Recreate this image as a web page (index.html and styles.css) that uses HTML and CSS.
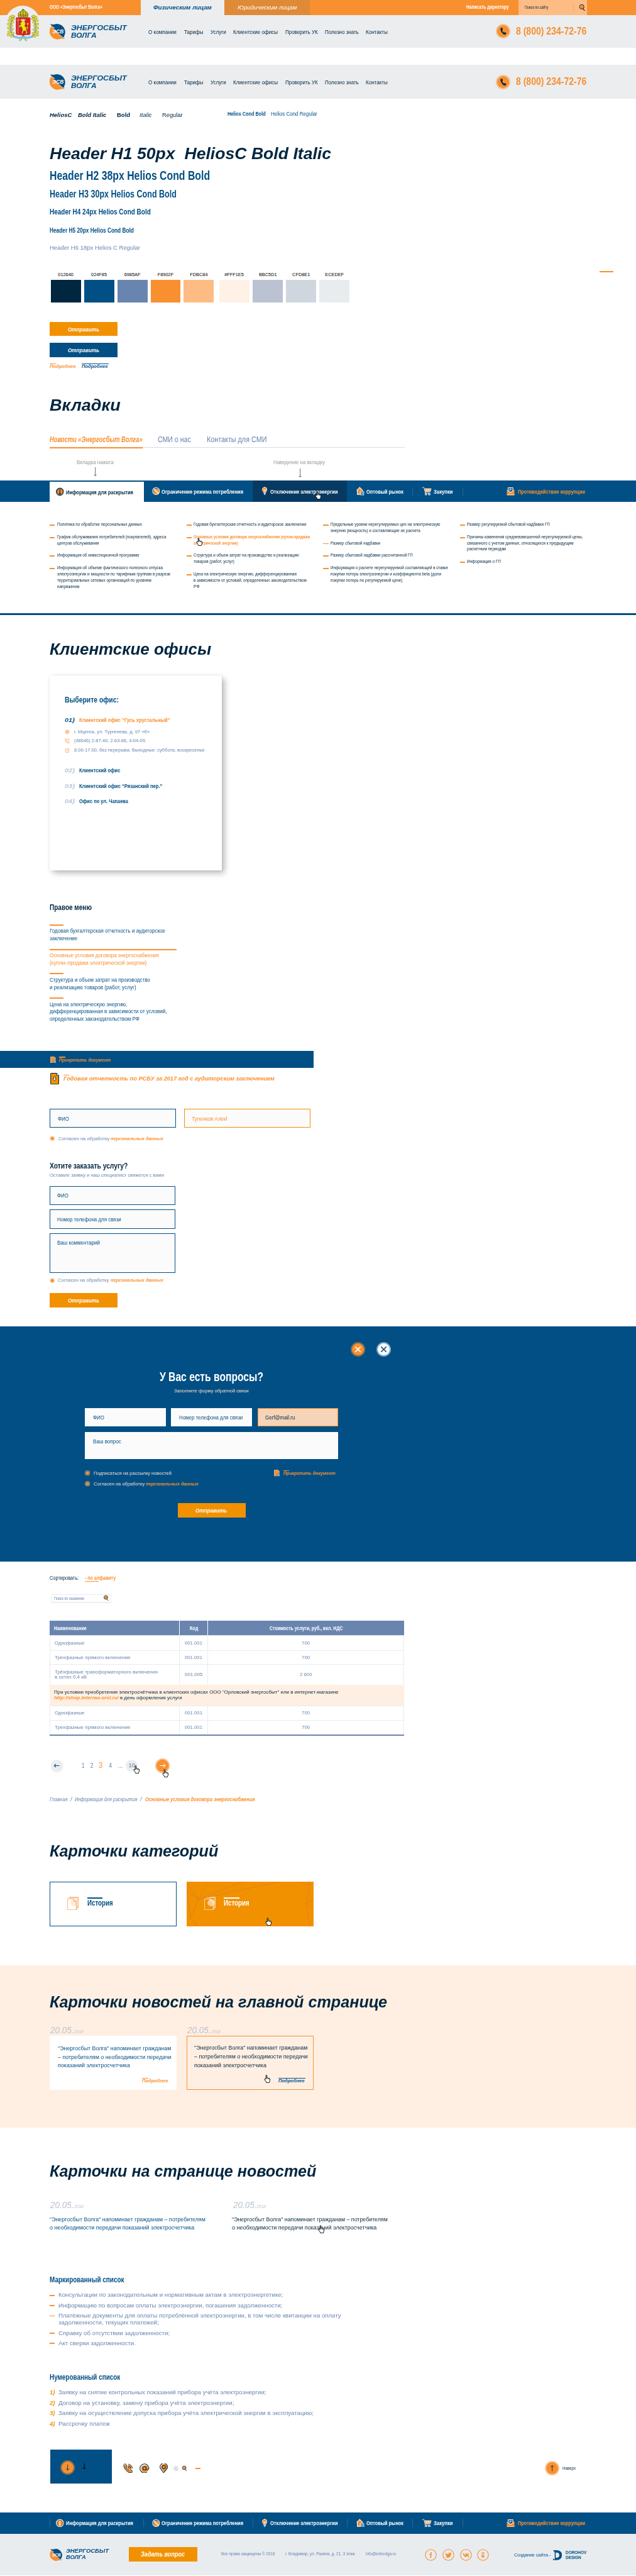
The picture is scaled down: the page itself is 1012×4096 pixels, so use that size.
FILE: index.html
```html
<!DOCTYPE html>
<html lang="ru">
<head>
<meta charset="utf-8">
<title>Энергосбыт Волга — UI Kit</title>
<link rel="stylesheet" href="styles.css">
</head>
<body>
<svg class="defs" aria-hidden="true">
  <symbol id="mark" viewBox="0 0 48 50">
    <path fill="#f8902f" d="M4 10 16 15 13 16 34 39 46 47 34 46.500A24.500 24.500 0 0 1 4 10Z"/>
    <path fill="#024f85" d="M2 3 13 4A24.500 24.500 0 0 1 43 40L45 43 38 41 12 17 16 14 7 9Z"/>
    <text x="8" y="30.500" font-size="15.500" font-weight="bold" font-style="italic" fill="#fff" textLength="34" lengthAdjust="spacingAndGlyphs">ЭСВ</text>
  </symbol>
  <symbol id="leaf" viewBox="0 0 30 90">
    <path d="M26 8Q8 40 14 62T34 86" fill="none" stroke="#7dbbe8" stroke-width="7"/>
    <g fill="#f2e21b" stroke="#6b6412" stroke-width="1">
      <ellipse cx="20" cy="10" rx="7" ry="4"/><ellipse cx="12" cy="15" rx="5" ry="4"/><ellipse cx="22" cy="20" rx="6" ry="4"/><ellipse cx="9" cy="25" rx="6" ry="4"/><ellipse cx="19" cy="31" rx="5" ry="4"/><ellipse cx="7" cy="38" rx="6" ry="4"/><ellipse cx="16" cy="44" rx="5" ry="4"/><ellipse cx="7" cy="52" rx="6" ry="4"/><ellipse cx="18" cy="57" rx="5" ry="4"/><ellipse cx="8" cy="66" rx="6" ry="4"/><ellipse cx="20" cy="71" rx="6" ry="4"/><ellipse cx="5" cy="76" rx="6" ry="4"/><ellipse cx="17" cy="81" rx="6" ry="4"/>
    </g>
  </symbol>
  <symbol id="emblem" viewBox="0 0 98 98">
    <use href="#leaf" x="-1" y="14" width="28" height="76"/>
    <use href="#leaf" x="-1" y="14" width="28" height="76" transform="translate(98 0) scale(-1 1)"/>
    <path d="M26 84Q38 92 49 83 60 92 72 84M49 84 38 97M49 84 60 97" fill="none" stroke="#7dbbe8" stroke-width="6"/>
    <path d="M44 88 37 97M54 88 61 97" stroke="#e8d81c" stroke-width="3"/>
    <path d="M27 26H71V73Q71 79 65 79H54L49 82 44 79H33Q27 79 27 73Z" fill="#dd1f1f"/>
    <path d="M34 29V76M29 34H40" stroke="#b9b9b9" stroke-width="1.500" fill="none"/>
    <path d="M44 37Q49 34 54 37L56 45 54 52 59 58 62 74 56 77 58 68 51 66 47 76 44 75 47 62 44 54 36 56 36 52 43 47 35 46 42 43ZM57 64Q68 60 62 50T66 43" fill="#f2e21b" stroke="#5b4e10" stroke-width="1.200"/>
    <path d="M43 36 42 30 46 33 49 30 52 33 56 30 54 36Z" fill="#eee"/>
    <path d="M35 25Q31 10 43 8 45 2 49 2 53 2 55 8 67 10 63 25Z" fill="#d9c81d" stroke="#4d4710" stroke-width="1.500"/>
    <path d="M49 0V25M42 9Q39 17 43 24M56 9Q59 17 55 24M35 19H63" stroke="#4d4710" stroke-width="1.500" fill="none"/>
  </symbol>
  <symbol id="lens" viewBox="0 0 20 24"><circle cx="10" cy="11" r="7" fill="#f8902f"/><circle cx="9" cy="10" r="7.500" fill="none" stroke="#012640" stroke-width="2"/><path d="m13 17 6 6" stroke="#012640" stroke-width="2.500"/></symbol>
  <symbol id="call" viewBox="0 0 44 44"><circle cx="22" cy="22" r="22" fill="#f8902f" opacity=".45"/><circle cx="22" cy="22" r="18" fill="#f8902f"/><path d="M15 13q3-3 5 0l1 4-2 2q1 5 5 7l3-1 4 2q1 3-2 5-7 1-12-8-5-8-2-11Z" fill="#012640"/></symbol>
  <symbol id="info" viewBox="0 0 24 24"><circle cx="12" cy="12" r="11" fill="#f8902f" stroke="currentColor" stroke-width="2"/><circle cx="12" cy="12" r="8.500" fill="none" stroke="#012640"/><circle cx="12" cy="7" r="1.800" fill="currentColor"/><path d="M12 10v8M10 10.500h2M9.500 18h5" stroke="currentColor" stroke-width="2.600"/></symbol>
  <symbol id="stop" viewBox="0 0 24 24"><circle cx="13" cy="13" r="9" fill="#f8902f"/><circle cx="12" cy="12" r="10.500" fill="none" stroke="#fff" stroke-width="2"/><path d="m5 5 14 14" stroke="#fff" stroke-width="2.500"/></symbol>
  <symbol id="bulb" viewBox="0 0 16 24"><path d="M4.500 16Q4 13 2 11A7 7 0 1 1 14 11Q12 13 11.500 16Z" fill="#f8902f" stroke="#fff" stroke-width="1.800"/><path d="m5 8 3 2 3-2M8 10v6M4.500 19h7M6 22h4" stroke="#fff" stroke-width="2" fill="none"/></symbol>
  <symbol id="house" viewBox="0 0 24 26"><path d="M2 10 11 3 20 10V23H4V10" fill="#f8902f"/><path d="M1 11 10 2 19 11M3 10V23H11" fill="none" stroke="#fff" stroke-width="2"/><path d="M12 14H23V25H12ZM12 18H23M12 21.500H23" fill="#024f85" stroke="#fff" stroke-width="1.600"/></symbol>
  <symbol id="cart" viewBox="0 0 28 26"><path d="M7 5H26L23 15H8Z" fill="#f8902f"/><path d="M0 2H5L9 19H24M7 6H27L24 15H8M13 6V15M19 6V15M8 10H25" fill="none" stroke="#fff" stroke-width="1.600"/><circle cx="11" cy="22.500" r="2.500" fill="none" stroke="#fff" stroke-width="2"/><circle cx="21" cy="22.500" r="2.500" fill="none" stroke="#fff" stroke-width="2"/></symbol>
  <symbol id="mail" viewBox="0 0 25 26"><path d="M1 10 12 2 24 10V25H1Z" fill="#f8902f"/><path d="M5 12V3H19V12L12 17Z" fill="#024f85" stroke="#fff" stroke-width="2"/><path d="M10 12V6H14V9H10" stroke="#fff" fill="none" stroke-width="1.500"/><path d="M1 24.500H24" stroke="#fff" stroke-width="2"/></symbol>
  <symbol id="hand" viewBox="0 0 20 25"><path d="M6 13V3Q6 1 7.500 1T9 3V9Q11 8 12 10 14 9 15 11 18 10.500 18 13V18L16 23V24H7V22L2 15Q1 12 4 12Z" fill="#fff" stroke="#000" stroke-width="1.800" stroke-linejoin="round"/><path d="M9 9V13M12 10V13M15 11V14" stroke="#000" stroke-width="1.200"/></symbol>
  <symbol id="radio" viewBox="0 0 16 16"><circle cx="8" cy="8" r="7.300" fill="none" stroke="#fdbc84" stroke-width="1.400"/><circle cx="8" cy="8" r="5" fill="#f8902f"/></symbol>
  <symbol id="clip" viewBox="0 0 17 20"><path d="M.700.700H12L16 5V19H.700Z" fill="#f8902f" stroke="#fbd3ab" stroke-width="1.300"/><path d="m7 17 8-9 2 4-5 6Z" fill="#9dc0da" stroke="#024f85"/></symbol>
  <symbol id="file" viewBox="0 0 27 35"><path d="M1.200 3q0-2 2-2H19L25.500 8V32q0 2-2 2H3.200q-2 0-2-2Z" fill="#f29100" stroke="#012640" stroke-width="2"/><path d="M19 1V8H25.500" fill="#fff" stroke="#012640" stroke-width="1.800"/><path d="M10.500 12H15.500V18H18L13 24 8 18H10.500Z" fill="#fff" stroke="#012640" stroke-width="1.500"/></symbol>
  <symbol id="docs" viewBox="0 0 34 40"><path d="M7 .700H33.300V33H30M4 4V3H30V37H27" fill="none" stroke="currentColor" stroke-width="1.300"/><circle cx="21" cy="18" r="11" fill="#ffe3cc" opacity=".7"/><path d="M.700 6.500H20L27 14V39.300H.700ZM20 6.500V14H27" fill="none" stroke="currentColor" stroke-width="1.300"/></symbol>
  <symbol id="down" viewBox="0 0 44 44"><circle cx="22" cy="22" r="22" fill="#f8902f" opacity=".5"/><circle cx="22" cy="22" r="18" fill="#f8902f"/><path d="M22 13V30M17 25 22 30 27 25" fill="none" stroke="#012640" stroke-width="1.600"/></symbol>
</svg>

<div class="page">
  <header class="top">
    <div class="topbar">
      <div class="crest"><svg><use href="#emblem"/></svg></div>
      <div class="org"><b class="t" data-w="159">ООО «Энергосбыт Волга»</b></div>
      <div class="aud aud-on"><b class="t it" data-w="176">Физическим лицам</b></div>
      <div class="aud aud-off"><i class="t" data-w="179">Юридическим лицам</i></div>
      <div class="director"><b class="t" data-w="128">Написать директору</b></div>
      <div class="sitesearch"><span class="t" data-w="71">Поиск по сайту</span><svg><use href="#lens"/></svg></div>
    </div>
    <div class="mainbar">
      <div class="logo"><svg><use href="#mark"/></svg><div><b class="t it" data-w="168">ЭНЕРГОСБЫТ</b><b class="t it" data-w="77">ВОЛГА</b></div></div>
      <nav><span class="t" data-w="85">О компании</span><span class="t" data-w="58">Тарифы</span><span class="t" data-w="47">Услуги</span><span class="t" data-w="135">Клиентские офисы</span><span class="t" data-w="98">Проверить УК</span><span class="t" data-w="102">Полезно знать</span><span class="t" data-w="66">Контакты</span></nav>
      <div class="phone"><svg><use href="#call"/></svg><b class="t" data-w="213">8 (800) 234-72-76</b></div>
    </div>
  </header>
  <header class="mainbar fixedbar">
    <div class="logo"><svg><use href="#mark"/></svg><div><b class="t it" data-w="168">ЭНЕРГОСБЫТ</b><b class="t it" data-w="77">ВОЛГА</b></div></div>
    <nav><span class="t" data-w="85">О компании</span><span class="t" data-w="58">Тарифы</span><span class="t" data-w="47">Услуги</span><span class="t" data-w="135">Клиентские офисы</span><span class="t" data-w="98">Проверить УК</span><span class="t" data-w="102">Полезно знать</span><span class="t" data-w="66">Контакты</span></nav>
    <div class="phone"><svg><use href="#call"/></svg><b class="t" data-w="213">8 (800) 234-72-76</b></div>
  </header>

  <section class="pad">
    <div class="samples">
      <b class="t it" data-w="67">HeliosC</b><b class="t it s2" data-w="86">Bold Italic</b><b class="t s3" data-w="40">Bold</b><i class="t s3" data-w="37">Italic</i><span class="t s3" data-w="62">Regular</span>
      <div class="cond"><b class="t" data-w="115">Helios Cond Bold</b><span class="t" data-w="140">Helios Cond Regular</span></div>
    </div>
    <h1 class="h1 first"><span class="t" data-w="850">Header H1 50px&nbsp; HeliosC Bold Italic</span></h1>
    <h2 class="h2"><span class="t" data-w="484">Header H2 38px Helios Cond Bold</span></h2>
    <h3 class="h3"><span class="t" data-w="383">Header H3 30px Helios Cond Bold</span></h3>
    <h4 class="h4"><span class="t" data-w="305">Header H4 24px Helios Cond Bold</span></h4>
    <h5 class="h5"><span class="t" data-w="254">Header H5 20px Helios Cond Bold</span></h5>
    <h6 class="h6"><span class="t" data-w="273">Header H6 18px Helios C Regular</span></h6>
    <div class="swatches">
      <div class="sw c1">012640<i></i></div><div class="sw c2">024F85<i></i></div><div class="sw c3">6985AF<i></i></div><div class="sw c4">F8902F<i></i></div><div class="sw c5">FDBC84<i></i></div><div class="sw c6">#FFF1E5<i></i></div><div class="sw c7">BBC5D1<i></i></div><div class="sw c8">CFD8E1<i></i></div><div class="sw c9">ECEDEF<i></i></div>
      <div class="dash"></div>
    </div>
    <div class="btn b-first"><b class="t it" data-w="95">Отправить</b></div>
    <div class="btn blue"><b class="t it" data-w="95">Отправить</b></div>
    <div class="mores"><div class="more"><b class="t it" data-w="79">Подробнее</b></div><div class="more on"><b class="t it" data-w="79">Подробнее</b></div></div>

    <h1 class="h1 g-tabs"><span class="t" data-w="214">Вкладки</span></h1>
    <div class="tabs"><b class="t it" data-w="280">Новости «Энергосбыт Волга»</b><span class="t" data-w="100">СМИ о нас</span><span class="t" data-w="181">Контакты для СМИ</span></div>
    <div class="tabline"><i></i><u></u></div>
    <div class="notes">
      <div class="n1"><span class="t" data-w="112">Вкладка нажата</span><svg viewBox="0 0 10 27"><path d="M5 0V26M1 22 5 26 9 22"/></svg></div>
      <div class="n2"><span class="t" data-w="156">Наведение на вкладку</span><svg viewBox="0 0 10 27"><path d="M5 0V26M1 22 5 26 9 22"/></svg></div>
    </div>
  </section>

  <nav class="menu">
    <div class="m m1 active"><svg><use href="#info"/></svg><b class="t" data-w="203">Информация для раскрытия</b></div>
    <div class="m m2"><svg><use href="#stop"/></svg><b class="t" data-w="247">Ограничение режима потребления</b></div>
    <div class="m m3 hover"><svg><use href="#bulb"/></svg><b class="t" data-w="204">Отключение электроэнергии</b></div>
    <div class="m m4"><svg><use href="#house"/></svg><b class="t" data-w="112">Оптовый рынок</b><s></s></div>
    <div class="m m5"><svg><use href="#cart"/></svg><b class="t" data-w="58">Закупки</b><s></s></div>
    <div class="m m6"><svg><use href="#mail"/></svg><b class="t" data-w="203">Противодействие коррупции</b></div>
    <svg class="hand hd1"><use href="#hand"/></svg>
  </nav>
  <div class="submenu">
    <ul>
      <li><p><span class="t" data-w="256">Политика по обработке персональных данных</span></p></li>
      <li><p><span class="t" data-w="329">График обслуживания потребителей (покупателей), адреса</span><span class="t" data-w="126">центров обслуживания</span></p></li>
      <li><p><span class="t" data-w="248">Информация об инвестиционной программе</span></p></li>
      <li><p><span class="t" data-w="319">Информация об объеме фактического полезного отпуска</span><span class="t" data-w="342">электроэнергии и мощности по тарифным группам в разрезе</span><span class="t" data-w="284">территориальных сетевых организаций по уровням</span><span class="t" data-w="67">напряжения</span></p></li>
    </ul>
    <ul>
      <li><p><span class="t" data-w="341">Годовая бухгалтерская отчетность и аудиторское заключение</span></p></li>
      <li class="cur"><p><b class="t" data-w="351">Основные условия договора энергоснабжения (купли-продажи</b><b class="t" data-w="133">электрической энергии)</b></p><svg class="hand"><use href="#hand"/></svg></li>
      <li><p><span class="t" data-w="318">Структура и объем затрат на производство и реализацию</span><span class="t" data-w="123">товаров (работ, услуг)</span></p></li>
      <li><p><span class="t" data-w="311">Цена на электрическую энергию, дифференцированная</span><span class="t" data-w="341">в зависимости от условий, определенных законодательством</span><span class="t" data-w="18">РФ</span></p></li>
    </ul>
    <ul>
      <li><p><span class="t" data-w="331">Предельные уровни нерегулируемых цен на электрическую</span><span class="t" data-w="271">энергию (мощность) и составляющие их расчета</span></p></li>
      <li><p><span class="t" data-w="150">Размер сбытовой надбавки</span></p></li>
      <li><p><span class="t" data-w="248">Размер сбытовой надбавки рассчитанной ГП</span></p></li>
      <li><p><span class="t" data-w="355">Информация о расчете нерегулируемой составляющей в ставке</span><span class="t" data-w="334">покупки потерь электроэнергии и коэффициента beta (доли</span><span class="t" data-w="217">покупки потерь по регулируемой цене)</span></p></li>
    </ul>
    <ul>
      <li><p><span class="t" data-w="250">Размер регулируемой сбытовой надбавки ГП</span></p></li>
      <li><p><span class="t" data-w="350">Причины изменения средневзвешенной нерегулируемой цены,</span><span class="t" data-w="322">связанного с учетом данных, относящихся к предыдущим</span><span class="t" data-w="118">расчетным периодам</span></p></li>
      <li><p><span class="t" data-w="102">Информация о ГП</span></p></li>
    </ul>
  </div>

  <section class="pad">
    <h1 class="h1 g-off"><span class="t" data-w="488">Клиентские офисы</span></h1>
    <div class="offices">
      <h4><span class="t" data-w="163">Выберите офис:</span></h4>
      <div class="of o1"><b class="t it" data-w="30">01)</b><b class="t" data-w="274">Клиентский офис “Гусь хрустальный”</b></div>
      <div class="det">
        <div><svg viewBox="0 0 16 16"><path d="M8 15 1.500 8A6.500 6.500 0 1 1 14.500 8Z"/><circle cx="8" cy="7" r="4"/><circle cx="8" cy="7" r="1.500"/></svg><span class="t" data-w="228">г. Мценск, ул. Тургенева, д. 97 «б»</span></div>
        <div><svg viewBox="0 0 16 16"><path d="M2 1q3-1 4 3l-2 2q1 4 5 6l2-2q4 1 4 4-3 3-8-1T1 5ZM9 1q5 1 6 6M9 4q3 0 3 3"/></svg><span class="t" data-w="218">(48646) 2-87-40, 2-63-86, 4-04-09.</span></div>
        <div><svg viewBox="0 0 16 16"><circle cx="8" cy="8.500" r="6"/><path d="M8 5V9H10M1 4 4 1.500M15 4 12 1.500M3 15 4 13M13 15 12 13"/></svg><span class="t" data-w="394">8.00-17.00, без перерыва. Выходные: суббота, воскресенье</span></div>
      </div>
      <div class="of o2"><b class="t it" data-w="30">02)</b><b class="t" data-w="124">Клиентский офис</b></div>
      <div class="of o3"><b class="t it" data-w="30">03)</b><b class="t" data-w="251">Клиентский офис “Рязанский пер.”</b></div>
      <div class="of o4"><b class="t it" data-w="30">04)</b><b class="t" data-w="148">Офис по ул. Чапаева</b></div>
    </div>
    <h4 class="rm-h"><span class="t" data-w="127">Правое меню</span></h4>
    <div class="rmenu">
      <p><span class="t" data-w="349">Годовая бухгалтерская отчетность и аудиторское</span><span class="t" data-w="84">заключение</span></p>
      <p class="on"><span class="t" data-w="330">Основные условия договора энергоснабжения</span><span class="t" data-w="293">(купли–продажи электрической энергии)</span></p>
      <p><span class="t" data-w="303">Структура и объем затрат на производство</span><span class="t" data-w="261">и реализацию товаров (работ, услуг)</span></p>
      <p><span class="t" data-w="234">Цена на электрическую энергию,</span><span class="t" data-w="354">дифференцированная в зависимости от условий,</span><span class="t" data-w="271">определенных законодательством РФ</span></p>
    </div>
  </section>

  <div class="band"><svg><use href="#clip"/></svg><div class="more"><b class="t it" data-w="156">Прикрепить документ</b></div></div>

  <section class="pad">
    <div class="report"><svg><use href="#file"/></svg><div class="more big"><b class="t it" data-w="637">Годовая отчетность по РСБУ за 2017 год с аудиторским заключением</b></div></div>
    <div class="pair"><div class="inp"><span class="t" data-w="34">ФИО</span></div><div class="inp focus"><span class="t" data-w="107">Туленков Алекl</span></div></div>
    <div class="agree a1"><svg><use href="#radio"/></svg><span class="t" data-w="154">Согласен на обработку</span><b class="t it" data-w="159">персональных данных</b></div>
    <div class="order">
      <h4><span class="t" data-w="236">Хотите заказать услугу?</span></h4>
      <div class="hint"><span class="t" data-w="345">Оставьте заявку и наш специалист свяжется с вами</span></div>
      <div class="inp"><span class="t" data-w="34">ФИО</span></div>
      <div class="inp"><span class="t" data-w="193">Номер телефона для связи</span></div>
      <div class="inp area"><span class="t" data-w="129">Ваш комментарий</span></div>
      <div class="agree a2"><svg><use href="#radio"/></svg><span class="t" data-w="154">Согласен на обработку</span><b class="t it" data-w="159">персональных данных</b></div>
      <div class="btn b-order"><b class="t it" data-w="95">Отправить</b></div>
    </div>
  </section>

  <section class="ask">
    <div class="closes">
      <svg viewBox="0 0 44 44"><circle cx="22" cy="22" r="22" fill="#f8902f" opacity=".5"/><circle cx="22" cy="22" r="18" fill="#f8902f"/><path d="m14 14 16 16M30 14 14 30" stroke="#fff" stroke-width="3"/></svg>
      <svg viewBox="0 0 44 44"><circle cx="22" cy="22" r="22" fill="#fff" opacity=".5"/><circle cx="22" cy="22" r="18" fill="#fff"/><path d="m14 14 16 16M30 14 14 30" stroke="#024f85" stroke-width="3"/></svg>
    </div>
    <div class="askform">
      <h2><span class="t" data-w="313">У Вас есть вопросы?</span></h2>
      <div class="asub"><span class="t" data-w="225">Заполните форму обратной связи</span></div>
      <div class="arow"><div class="ai"><span class="t" data-w="34">ФИО</span></div><div class="ai"><span class="t" data-w="192">Номер телефона для связи</span></div><div class="ai filled"><span class="t" data-w="90">Gerf@mail.ru</span></div></div>
      <div class="ai aq"><span class="t" data-w="85">Ваш вопрос</span></div>
      <div class="aopts">
        <div><div class="agree"><svg><use href="#radio"/></svg><span class="t" data-w="235">Подписаться на рассылку новостей</span></div><div class="agree"><svg><use href="#radio"/></svg><span class="t" data-w="154">Согласен на обработку</span><b class="t it" data-w="159">персональных данных</b></div></div>
        <div class="attach"><svg><use href="#clip"/></svg><div class="more"><b class="t it" data-w="157">Прикрепить документ</b></div></div>
      </div>
      <div class="btn b-ask"><b class="t it" data-w="95">Отправить</b></div>
    </div>
  </section>

  <section class="pad">
    <div class="sort"><span class="t" data-w="88">Сортировать:</span><div><b class="t" data-w="93">- по алфавиту</b><i></i></div></div>
    <div class="find"><span class="t" data-w="91">Поиск по названию</span><svg><use href="#lens"/></svg></div>
    <div class="table">
      <div class="tr th"><div><b class="t" data-w="98">Наименование</b></div><div><b class="t" data-w="25">Код</b></div><div><b class="t" data-w="221">Стоимость услуги, руб., вкл. НДС</b></div></div>
      <div class="tr r1"><div><span class="t" data-w="90">Однофазные</span></div><div><span class="t" data-w="53">001.001</span></div><div><span class="t" data-w="25">700</span></div></div>
      <div class="tr r2"><div><span class="t" data-w="228">Трехфазные прямого включения</span></div><div><span class="t" data-w="53">001.001</span></div><div><span class="t" data-w="25">700</span></div></div>
      <div class="tr r3"><div><span class="t" data-w="311">Трёхфазные трансформаторного включения</span><span class="t" data-w="97">в сетях 0,4 кВ</span></div><div><span class="t" data-w="54">001.005</span></div><div><span class="t" data-w="37">2 600</span></div></div>
      <div class="note"><div><span class="t" data-w="859">При условии приобретения электросчётчика в клиентских офисах ООО "Орловский энергосбыт" или в интернет-магазине</span></div><div><b class="t it" data-w="195">http://shop.interrao-orel.ru/</b><span class="t" data-w="187">в день оформления услуги</span></div></div>
      <div class="tr r4"><div><span class="t" data-w="90">Однофазные</span></div><div><span class="t" data-w="53">001.001</span></div><div><span class="t" data-w="25">700</span></div></div>
      <div class="tr r5"><div><span class="t" data-w="228">Трехфазные прямого включения</span></div><div><span class="t" data-w="53">001.001</span></div><div><span class="t" data-w="25">700</span></div></div>
    </div>
    <div class="pager">
      <svg class="prev" viewBox="0 0 36 36"><circle cx="18" cy="18" r="17.500" fill="#ecedef"/><path d="M26 18H10M15 13 10 18 15 23" fill="none" stroke="#024f85" stroke-width="2"/></svg>
      <span class="p1">1</span><span class="p2">2</span><span class="p3">3</span><span class="p4">4</span><span class="p5">...</span><span class="p10">10<svg class="hand"><use href="#hand"/></svg></span>
      <div class="next"><svg viewBox="0 0 44 44"><circle cx="22" cy="22" r="22" fill="#fdbc84"/><circle cx="22" cy="22" r="18" fill="#f8902f"/><path d="M14 22H30M25 17 30 22 25 27" fill="none" stroke="#fff" stroke-width="2"/></svg><svg class="hand"><use href="#hand"/></svg></div>
    </div>
    <div class="crumbs"><i class="t" data-w="54">Главная</i><i class="t" data-w="5">/</i><i class="t" data-w="189">Информация для раскрытия</i><i class="t" data-w="5">/</i><b class="t it" data-w="331">Основные условия договора энергоснабжения</b></div>

    <h1 class="h1 g-cat"><span class="t" data-w="509">Карточки категорий</span></h1>
    <div class="cats">
      <div class="cat"><svg><use href="#docs"/></svg><div><i></i><b class="t" data-w="77">История</b></div></div>
      <div class="cat full">
        <svg class="web" viewBox="0 0 383 135" preserveAspectRatio="none"><path d="M0 28 36 53 62 4M0 5 36 53 168 0M36 53 280 0M36 53 12 110 0 20M12 110 34 135M335 0 372 12 360 66 372 130M372 0V12M383 55 360 66 383 78"/></svg>
        <svg><use href="#docs"/></svg><div><i></i><b class="t" data-w="77">История</b></div><svg class="hand"><use href="#hand"/></svg>
      </div>
    </div>
  </section>

  <section class="pad peach">
    <h1 class="h1 g-main"><span class="t" data-w="1019">Карточки новостей на главной странице</span></h1>
    <div class="newsrow">
      <div><div class="date"><i class="t d" data-w="71">20.05.</i><i class="t" data-w="28">2018</i></div>
        <div class="ncard"><span class="t" data-w="342">"Энергосбыт Волга" напоминает гражданам</span><span class="t" data-w="343">– потребителям о необходимости передачи</span><span class="t" data-w="218">показаний электросчетчика</span><div class="more"><b class="t it" data-w="79">Подробнее</b></div></div></div>
      <div><div class="date"><i class="t d" data-w="71">20.05.</i><i class="t" data-w="28">2018</i></div>
        <div class="ncard over"><span class="t" data-w="342">"Энергосбыт Волга" напоминает гражданам</span><span class="t" data-w="343">– потребителям о необходимости передачи</span><span class="t" data-w="218">показаний электросчетчика</span><div class="more on"><b class="t it" data-w="79">Подробнее</b></div><svg class="hand"><use href="#hand"/></svg></div></div>
    </div>
  </section>

  <section class="pad">
    <h1 class="h1 g-news"><span class="t" data-w="805">Карточки на странице новостей</span></h1>
    <div class="newslist">
      <div><div class="date"><i class="t d" data-w="71">20.05.</i><i class="t" data-w="28">2018</i></div><p><span class="t" data-w="470">"Энергосбыт Волга" напоминает гражданам – потребителям</span><span class="t" data-w="437">о необходимости передачи показаний электросчетчика</span></p></div>
      <div class="over"><div class="date"><i class="t d" data-w="71">20.05.</i><i class="t" data-w="28">2018</i></div><p><span class="t" data-w="470">"Энергосбыт Волга" напоминает гражданам – потребителям</span><span class="t" data-w="437">о необходимости передачи показаний электросчетчика</span></p><svg class="hand"><use href="#hand"/></svg></div>
    </div>
    <h4 class="lh l1"><span class="t" data-w="225">Маркированный список</span></h4>
    <ul class="marks">
      <li><p><span class="t" data-w="678">Консультации по законодательным и нормативным актам в электроэнергетике;</span></p></li>
      <li><p><span class="t" data-w="676">Информацию по вопросам оплаты электроэнергии, погашения задолженности;</span></p></li>
      <li><p><span class="t" data-w="853">Платёжные документы для оплаты потреблённой электроэнергии, в том числе квитанции на оплату</span><span class="t" data-w="303">задолженности, текущих платежей;</span></p></li>
      <li><p><span class="t" data-w="336">Справку об отсутствии задолженности;</span></p></li>
      <li><p><span class="t" data-w="233">Акт сверки задолженности.</span></p></li>
    </ul>
    <h4 class="lh l2"><span class="t" data-w="213">Нумерованный список</span></h4>
    <div class="nums">
      <div><b class="t it" data-w="16">1)</b><span class="t" data-w="627">Заявку на снятие контрольных показаний прибора учёта электроэнергии;</span></div>
      <div><b class="t it" data-w="16">2)</b><span class="t" data-w="530">Договор на установку, замену прибора учёта электроэнергии;</span></div>
      <div><b class="t it" data-w="16">3)</b><span class="t" data-w="770">Заявку на осуществление допуска прибора учёта электрической энергии в эксплуатацию;</span></div>
      <div><b class="t it" data-w="16">4)</b><span class="t" data-w="155">Рассрочку платеж</span></div>
    </div>
    <div class="icons">
      <div class="sq"><svg class="ci"><use href="#down"/></svg><svg class="ar" viewBox="0 0 12 19"><path d="M6 0V17M2 13 6 17 10 13" fill="none" stroke="#000" stroke-width="1.800"/></svg></div>
      <svg class="k1" viewBox="0 0 30 30"><g transform="translate(1 1)" fill="#f8902f"><path d="M6 3 11 9 9 14 18 22 23 19 28 25 22 28Q12 26 4 14T6 3Z"/><circle cx="18" cy="11" r="7"/></g><path d="M5 1Q9 1 11 8L8 12Q11 18 18 22L22 19Q28 21 29 25 25 30 19 28 8 24 3 12 0 4 5 1ZM15 2Q26 4 28 15M15 7Q22 8 23 15M15 12Q18 12 18 15" fill="none" stroke="#012640" stroke-width="1.800"/></svg>
      <svg class="k2" viewBox="0 0 30 30"><circle cx="16" cy="16" r="11" fill="#f8902f"/><circle cx="15" cy="15" r="5" fill="none" stroke="#012640" stroke-width="2"/><path d="M20 10V17Q21 21 25 19 29 16 28 12A13.500 13.500 0 1 0 22 26.500" fill="none" stroke="#012640" stroke-width="2"/></svg>
      <svg class="k3" viewBox="0 0 26 30"><path d="M15 27 5 15A10 10 0 1 1 24 13Z" fill="#f8902f"/><path d="M12 28 3 16A11 11 0 1 1 22 16Z" fill="none" stroke="#012640" stroke-width="2"/><circle cx="12.500" cy="11" r="5" fill="none" stroke="#012640" stroke-width="2"/></svg>
      <svg class="k4" viewBox="0 0 15 15"><circle cx="7.500" cy="7.500" r="6" fill="#e6e9ee" stroke="#cfd8e1" stroke-width="2"/><path d="M7.500 6V11M7.500 3.500V5" stroke="#bbc5d1" stroke-width="1.500"/></svg>
      <svg class="k5"><use href="#lens"/></svg>
      <div class="k6"></div>
      <div class="totop"><svg><use href="#down"/></svg><span class="t" data-w="40">Наверх</span></div>
    </div>
  </section>

  <nav class="menu foot">
    <div class="m m1"><s class="lead"></s><svg><use href="#info"/></svg><b class="t" data-w="203">Информация для раскрытия</b><s></s></div>
    <div class="m m2"><svg><use href="#stop"/></svg><b class="t" data-w="247">Ограничение режима потребления</b><s></s></div>
    <div class="m m3"><svg><use href="#bulb"/></svg><b class="t" data-w="204">Отключение электроэнергии</b><s></s></div>
    <div class="m m4"><svg><use href="#house"/></svg><b class="t" data-w="112">Оптовый рынок</b><s></s></div>
    <div class="m m5"><svg><use href="#cart"/></svg><b class="t" data-w="58">Закупки</b><s></s></div>
    <div class="m m6"><svg><use href="#mail"/></svg><b class="t" data-w="203">Противодействие коррупции</b></div>
  </nav>
  <footer class="footer">
    <div class="logo small"><svg><use href="#mark"/></svg><div><b class="t it" data-w="129">ЭНЕРГОСБЫТ</b><b class="t it" data-w="60">ВОЛГА</b></div></div>
    <div class="btn b-foot"><b class="t it" data-w="133">Задать вопрос</b></div>
    <div class="legal"><span class="t" data-w="162">Все права защищены © 2018</span><span class="t" data-w="210">г. Владимир, ул. Разина, д. 21, 3 этаж</span><span class="t" data-w="92">info@esbvolga.ru</span></div>
    <div class="social">
      <svg viewBox="0 0 36 36"><circle cx="18" cy="18" r="16.500"/><path d="M21 11H19.500Q18 11 18 13V27M14.500 17H21" stroke-width="3"/></svg>
      <svg viewBox="0 0 36 36"><circle cx="18" cy="18" r="16.500"/><path class="f" d="M9 24Q13 24 14 22 11 21 11 19 9 17 10 12 13 16 18 16 18 11 22 11 24 11 25 13L28 12 26 15Q26 26 16 26 12 26 9 24Z"/></svg>
      <svg viewBox="0 0 36 36"><circle cx="18" cy="18" r="16.500"/><path d="M10 13Q13 23 18 23V13M26 13Q24 17 19 18 24 19 27 24" stroke-width="3.500"/></svg>
      <svg viewBox="0 0 36 36"><circle cx="18" cy="18" r="16.500"/><circle cx="18" cy="13" r="3.200"/><path d="M13 19Q18 22 23 19M18 21 14 26M18 21 22 26" stroke-width="2.600"/></svg>
    </div>
    <div class="made"><span class="t" data-w="111">Создание сайта -</span><svg viewBox="0 0 27 30"><path fill="#024f85" fill-rule="evenodd" d="M0 0H11Q27 1 27 15T11 30H0V25L5 28V6Zm8 7V23H12Q19 22 19 15T12 7Z"/></svg><div><b class="t" data-w="63">DOROHOV</b><b class="t" data-w="47">DESIGN</b></div></div>
  </footer>
</div>
<script src="fit.js"></script>
</body>
</html>
```
FILE: fit.js
```js
// Condenses each label horizontally to the width given in data-w.
const probe = document.createElement('div');
probe.className = 'probe';
document.querySelector('.page').appendChild(probe);
const unit = probe.getBoundingClientRect().width / 1000;
probe.remove();
const labels = [...document.querySelectorAll('.t')];
const widths = labels.map(el => el.getBoundingClientRect().width / unit);
labels.forEach((el, i) => {
  const target = Number(el.dataset.w);
  el.style.transform = `scaleX(${target / widths[i]})`;
  el.style.marginRight = `${target - widths[i]}px`;
});
```
FILE: styles.css
```css
*{box-sizing:border-box}
html,body{margin:0;padding:0;background:#fff}
body{width:1012px;height:4096px;overflow:hidden;font-family:"Liberation Sans",Arial,sans-serif}
h1,h2,h3,h4,h5,h6,p,ul{margin:0;padding:0;font-weight:bold}
p{font-weight:normal}
ul{list-style:none}
svg{display:block;flex:none}
.defs{position:absolute;width:0;height:0}
.page{zoom:.52709;width:1920px;height:7771px;overflow:hidden;color:#012640;font-size:18px;display:flow-root}
.probe{width:1000px;height:1px}
.t{display:inline-block;white-space:nowrap;transform-origin:0 50%;flex:none}
.it{font-style:italic}
.pad{padding-left:150px}
.hand{position:absolute;width:20px;height:25px;z-index:3}

/* header */
.topbar{height:45px;background:#f8902f;display:flex;position:relative;font-size:17px;color:#fff;line-height:45px}
.crest{position:absolute;left:15px;top:18px;width:107px;height:107px;border-radius:50%;background:#ebedef;z-index:2}
.crest svg{width:98px;height:98px;margin:9px 0 0 5px}
.org{width:425px;padding-left:150px;flex:none}
.aud{flex:none;font-size:18px}
.aud-on{width:252px;padding-left:37px;background:#ebedef;color:#024f85}
.aud-off{width:258px;padding-left:40px;background:#de8a37}
.director{margin-left:472px;width:158px}
.sitesearch{width:207px;background:#fdbc84;padding-left:19px;font-size:13px;color:#012640;display:flex;align-items:center}
.sitesearch svg{width:36px;height:22px;margin-left:75px;border-left:1px solid #f0ac70;padding-left:16px}
.mainbar{height:100px;background:#ebedef;display:flex;align-items:center;padding-left:150px}
.fixedbar{margin-top:51px;height:102px}
.logo{display:flex;align-items:center;gap:17px;color:#024f85;width:298px}
.logo svg{width:48px;height:50px}
.logo div{display:flex;flex-direction:column;align-items:flex-start;font-size:22px;line-height:23.500px}
.mainbar nav{display:flex;gap:22px;width:1048px}
.phone{display:flex;align-items:center;gap:17px;color:#f8902f;font-size:30px}
.phone svg{width:44px;height:44px}

/* typography */
.samples{margin-top:39px;height:20px;display:flex;line-height:20px}
.samples .s2{margin-left:19px}
.samples .s3{margin-left:30px}
.cond{margin:-3px 0 0 136px;display:flex;gap:16px;color:#024f85}
.h1{font-size:49px;font-style:italic;height:60px;line-height:60px}
.first{margin-top:77px}
.h2,.h3,.h4,.h5{color:#024f85}
.h2{font-size:37px;line-height:44px;height:44px;margin-top:14px}
.h3{font-size:30px;line-height:36px;height:36px;margin-top:18px}
.h4{font-size:24px;line-height:30px;height:30px;margin-top:20px}
.h5{font-size:20px;line-height:24px;height:24px;margin-top:28px}
.h6{font-size:18px;line-height:22px;height:22px;margin-top:28.500px;color:#6985af;font-weight:normal}
.swatches{margin:59.500px 0 0 3px;display:flex;height:94px;gap:9.500px}
.sw{width:91px;padding-top:2.500px;font-size:14px;line-height:18px;text-align:center;color:#000}
.sw i{display:block;height:67px;margin-top:6.500px}
.c1 i{background:#012640}.c2 i{background:#024f85}.c3 i{background:#6985af}.c4 i{background:#f8902f}.c5 i{background:#fdbc84}
.c6{margin-left:6px}.c6 i{background:#fff1e5}.c7{margin-left:1.500px}.c7 i{background:#bbc2d1}.c8 i{background:#cfd6de}.c9 i{background:#e8ecef}
.dash{width:42px;height:4px;background:#f8902f;margin:0 68px 0 auto}
.btn{width:205px;height:43px;background:#f29100;color:#fff;font-size:18px;display:flex;align-items:center;justify-content:center}
.btn.blue{background:#024f85;margin-top:20px}
.b-first{margin-top:59px}
.mores{display:flex;gap:18px;margin-top:20px}
.more{height:18.500px;font-size:14px;line-height:16px;color:#f8902f;width:79px;white-space:nowrap}
.more::before{content:"";display:block;width:18px;height:2.500px;background:#f8902f}
.more.on{color:#024f85}
.more.on::before{width:81px;background:#024f85}
.more .t{vertical-align:top}

/* tabs */
.g-tabs{margin-top:78.500px}
.tabs{margin-top:59.700px;height:35.300px;line-height:28px;font-size:23px;color:#6985af;display:flex;gap:47px}
.tabs b{color:#f8902f}
.tabline{width:1071px;display:flex;align-items:center;height:4px}
.tabline i{width:280px;height:4px;background:#f8902f}
.tabline u{flex:1;height:2px;background:#d8dce6}
.notes{display:flex;margin-top:31.700px;height:65.300px;color:#999;line-height:20px;font-size:17px}
.notes div{display:flex;flex-direction:column;align-items:center}
.notes svg{width:10px;height:27px;margin-top:5px;fill:none;stroke:#444;stroke-width:1.500}
.n1{margin-left:82px}
.n2{margin-left:481px}
.n2 svg{margin:9px 0 0 6px}
.menu{height:65px;background:#024f85;display:flex;padding-left:149px;position:relative;color:#fff}
.m{display:flex;align-items:center;height:65px;flex:none}
.m svg{width:24px;height:26px}
.m s{width:1px;height:25px;background:#2a6796;margin-left:auto}
.m s.lead{margin:0 -1px 0 -20px}
.m1{width:285px;padding-left:20px;gap:7px}
.foot .m1{gap:0}
.foot .m1 svg{margin:0 7px 0 20px}
.m2{width:329px;padding-left:25px;gap:5px}
.m3{width:285px;padding-left:28px;gap:8px}
.m3 svg{width:16px}
.m4{width:198px;padding-left:28px;gap:6px}
.m5{width:151px;padding-left:29px;gap:7px}
.m5 svg{width:28px}
.m6{margin-left:132px;gap:10px;color:#f8902f}
.m6 svg{width:25px}
.m.active{background:#fff;color:#012640;margin-top:3px;height:63px}
.m.hover{background:#073a63}
.hd1{left:951px;top:32px}
.submenu{height:340px;border-bottom:7px solid #024f85;padding:60.200px 0 0 150px;display:flex;font-size:13.500px;line-height:18.600px}
.submenu ul{width:412.700px}
.submenu li{display:flex;margin-bottom:19px;position:relative}
.submenu li::before{content:"";width:16px;height:3.500px;margin:7.500px 6px 0 0;background:#f8902f;flex:none}
.submenu p,.rmenu p,.marks p,.newslist p{display:flex;flex-direction:column;align-items:flex-start}
.submenu .cur{color:#f8902f}
.submenu .hand{left:30px;top:9px}

/* offices */
.g-off{margin-top:74px}
.offices{margin-top:49px;width:520px;height:587.500px;background:#fff;box-shadow:9px 9px 18px rgba(0,0,0,.28),0 0 8px rgba(0,0,0,.08);padding:60px 0 0 46px;color:#024f85}
.offices h4{font-size:24px;line-height:28px;height:28px}
.of{display:flex;gap:13px;line-height:22px;height:22px}
.of .it{color:#bbc2d1}
.o1{margin-top:36.400px;color:#f8902f}
.o1 .it{color:#024f85}
.o2{margin-top:40.400px}.o3{margin-top:25.700px}.o4{margin-top:22.300px}
.det{margin-top:15.600px;display:flex;flex-direction:column;gap:6.800px;color:#6985af;font-size:14px;line-height:20px}
.det div{display:flex;align-items:center;height:20px;gap:13px}
.det svg{width:15px;height:16px;fill:none;stroke:#f8902f;stroke-width:1.300}
.rm-h{margin-top:99.100px;height:28px;line-height:28px;font-size:24px}
.rmenu{margin-top:36.400px;color:#024f85;line-height:22px}
.rmenu p{margin-bottom:21px}
.rmenu p::before{content:"";width:42px;height:4px;margin-bottom:4.700px;background:#f8902f}
.rmenu p:last-child{margin-bottom:0}
.rmenu .on{color:#f8902f}
.rmenu .on::before{width:383px}

/* forms */
.band{margin-top:86.200px;width:947px;height:52px;background:#024f85;padding:17px 0 0 152px;display:flex;gap:10px}
.band svg,.attach svg{width:17px;height:20px}
.band .more{margin-top:1px}
.report{margin-top:15px;height:34px;display:flex;gap:12px;padding-left:2px}
.report svg{width:27px;height:35px}
.big{margin-top:5.500px;font-size:18px;line-height:20px}
.pair{display:flex;gap:25px;margin-top:74px}
.inp{width:381px;height:57px;border:2px solid #024f85;background:#fbfbfb;color:#024f85;padding-left:22px;display:flex;align-items:center}
.focus{border:3px solid #f29100;color:#f8902f;padding-left:21px}
.agree{display:flex;align-items:center;height:20px;font-size:14.500px;color:#6985af}
.agree svg{width:16px;height:16px;margin-right:10px}
.agree b{color:#f8902f;margin-left:4px}
.a1{margin-top:22px}
.order{margin-left:-1px}
.order h4{margin-top:58px;font-size:25px;height:30px;line-height:30px}
.hint{margin-top:5px;height:18px;line-height:18px;font-size:14.500px;color:#6985af;margin-bottom:23px}
.order .inp{margin-bottom:14.300px}
.order .area{height:120px;align-items:flex-start;padding-top:16px;margin-bottom:0}
.a2{margin-top:12px}
.b-order{margin-top:29px}
.ask{margin-top:57px;height:709px;background:#024f85;padding-top:47px;color:#fff}
.closes{display:flex;gap:33px;padding-left:1059px}
.closes svg{width:44px;height:44px}
.askform{width:763px;margin:40px 0 0 257px}
.askform h2{font-size:38px;line-height:44px;height:44px;text-align:center}
.asub{margin-top:11.600px;height:18px;line-height:18px;font-size:14.500px;text-align:center;color:#f0dccb}
.arow{display:flex;gap:17px;margin:41.400px 0 17px}
.ai{width:243px;height:55px;background:#fbfbfb;color:#024f85;padding-left:23px;display:flex;align-items:center}
.filled{background:#f5d4b8;border:2px solid #f8902f;color:#012640;padding-left:21px}
.aq{width:763px;height:82px;align-items:flex-start;padding-top:17px}
.aopts{margin-top:33px;display:flex;justify-content:space-between}
.aopts .agree{margin-bottom:12px;color:#f0dccb}
.aopts .agree svg{margin-right:9px}
.attach{display:flex;gap:10px;width:192px}
.attach .more{margin-top:1px}
.b-ask{margin:37px auto 0}

/* table */
.sort{margin:39.600px 0 0 -1px;display:flex;gap:20px;height:21px;font-size:16px;line-height:19.500px}
.sort div{color:#f8902f;display:flex;flex-direction:column;align-items:flex-start}
.sort i{width:41px;height:2px;background:#f8902f}
.find{margin:38px 0 0 4px;width:181px;height:24.500px;border:1px solid #ececf0;box-shadow:0 2px 1px #f2f2f2;display:flex;align-items:center;padding-left:8px;font-size:12px;color:#6985af}
.find svg{margin-left:56px;width:18px;height:18px}
.table{margin-top:56px;width:1070.500px;border-bottom:4.500px solid #6985af;color:#6985af;font-size:15px;line-height:15.500px}
.tr{display:flex;height:44px;border-top:1px solid #e9ebf0}
.tr>div{display:flex;flex-direction:column;justify-content:center;align-items:center;border-right:1px solid #e9ebf0;width:86px}
.tr>div:first-child{width:392.500px;align-items:flex-start;padding-left:13px;border-left:1px solid #e9ebf0}
.tr>div:last-child{width:592px}
.tr.th{background:#6985af;color:#fff;font-size:16px;border:0}
.th>div,.th>div:first-child{border-color:#fff;border-left:0}
.th>div:last-child{border:0}
.r1{height:44.500px}.tr.r2{height:43px}.tr.r3{height:62.500px}.tr.r4{height:42.600px}
.note{height:62px;background:#ffefe2;color:#012640;padding:12.500px 0 0 14px;line-height:18px}
.note div{display:flex;gap:4px}
.note b{color:#f8902f}
.pager{margin-top:69px;height:44px;display:flex;align-items:center;padding-left:4px;color:#6985af;font-size:20px;line-height:36px}
.pager span{text-align:center}
.pager span:not(.p10){transform:scaleX(.82)}
.prev{width:36px;height:36px;filter:drop-shadow(0 2px 3px #e3e5e8)}
.p1{margin-left:54px;width:12px}
.p2{margin-left:15px;width:12px}
.pager .p3{margin-left:14px;width:16px;color:#f8902f;font-size:26px}
.p4{margin-left:14px;width:14px}
.p5{margin-left:13px;width:17px}
.p10{margin-left:9px;width:36px;height:36px;border-radius:50%;background:#ecedef;font-size:18px;position:relative}
.p10 .hand{left:22px;top:17px}
.next{margin-left:52px;width:44px;height:44px;position:relative}
.next svg{width:44px;height:44px}
.next .hand{left:22px;top:33px;width:20px;height:25px}
.crumbs{margin:71px 0 0 -1px;display:flex;gap:9px;font-size:15.500px;line-height:20px;height:20px;color:#6985af}
.crumbs b{color:#f8902f}

/* cards */
.g-cat{margin-top:116px}
.cats{display:flex;gap:30px;margin-top:60px}
.cat{width:383px;height:135px;border:1.900px solid #024f85;display:flex;padding:44px 0 0 52px;gap:25px;color:#f8902f;position:relative}
.cat>svg:not(.web):not(.hand){width:34px;height:40px}
.cat div{color:#024f85;font-size:24px;line-height:28px;padding-top:3px;position:relative}
.cat i{display:block;width:47px;height:3px;background:#024f85}
.cat .t{vertical-align:top}
.full{background:#f29100;border-color:#f29100;color:#fff}
.full div{color:#fff}
.full i{background:#fff}
.web{position:absolute;left:-2px;top:-2px;width:383px;height:135px;fill:none;stroke:#e08318;stroke-width:2}
.full .hand{left:236px;top:107px}
.peach{margin-top:118px;height:490px;background:#ffefe2;padding-top:81px}
.newsrow{display:flex;gap:30px;margin-top:39px}
.date{height:33.500px;line-height:34px;font-size:15px;color:#bbc2d1;padding-left:2px;display:flex;align-items:baseline;gap:1px}
.date .d{font-size:28px}
.ncard{width:383px;height:162.500px;background:#fff;padding:23.500px 0 0 24px;line-height:26px;color:#024f85;display:flex;flex-direction:column;align-items:flex-start;position:relative}
.ncard .more{margin:25px 0 0 255px}
.ncard.over{background:none;border:3px solid #f8902f;padding:20.500px 0 0 21px;color:#012640}
.ncard .hand{left:232px;top:114px}
.g-news{margin-top:102px}
.newslist{display:flex;margin-top:55px;height:95.500px}
.newslist>div{width:551px;position:relative;color:#024f85}
.newslist>.over{color:#012640}
.newslist p{margin-top:12px;line-height:25px}
.newslist .hand{left:259px;top:77px}
.lh{font-size:24px;line-height:28px;height:28px;color:#024f85}
.l1{margin-top:133.500px}
.l2{margin-top:78.300px}
.marks,.nums{margin-top:21.700px;color:#6985af;font-size:17.500px;line-height:20.600px;display:flex;flex-direction:column;gap:10.600px}
.marks li{display:flex}
.marks li::before{content:"";width:16px;height:3.500px;margin:8px 11px 0 0;background:#f8902f;flex:none}
.nums{margin-left:-1px}
.nums div{display:flex;gap:11px}
.nums b{color:#f29100}
.icons{margin-top:68.100px;height:101px;display:flex;padding-left:2px}
.sq{width:186px;background:#024f85;display:flex;padding-left:30px}
.ci{width:44px;height:44px;margin-top:31px}
.ar{width:12px;height:19px;margin:41px 0 0 23px}
.k1{width:30px;height:30px;margin:40px 0 0 33px}
.k2{width:30px;height:30px;margin:40px 0 0 21px}
.k3{width:26px;height:30px;margin:40px 0 0 30px}
.k4{width:15px;height:15px;margin:48px 0 0 15px}
.k5{width:17px;height:18px;margin:47px 0 0 10px}
.k6{width:15px;height:4px;margin:54px 0 0 25px;background:#f8902f}
.totop{margin:33px 0 0 1040px;display:flex;gap:10px;font-size:14px;line-height:44px}
.totop svg{width:44px;height:44px;transform:rotate(180deg)}

/* footer */
.foot{margin-top:87px}
.footer{height:126px;background:#e9ecef;padding-left:149px;display:flex;position:relative}
.small{width:240px;height:38px;margin-top:44px;gap:11px}
.small svg{width:39px;height:39px}
.small div{font-size:16.500px;line-height:18px}
.b-foot{margin-top:41px;width:206px;font-size:19px}
.legal{margin:52px 0 0 72px;display:flex;gap:33px;font-size:14px;line-height:20px;color:#6985af;width:615px}
.social{display:flex;gap:17px;margin-top:46px;width:270px}
.social svg{width:36px;height:36px;fill:none;stroke:#f8902f;stroke-width:2}
.social .f{fill:#f8902f;stroke:none}
.made{display:flex;margin-top:50px;color:#024f85;font-size:15px;line-height:30px;height:30px}
.made svg{width:27px;height:30px;margin:0 10px 0 7px}
.made div{display:flex;flex-direction:column;align-items:flex-start;font-size:13px;line-height:14.500px}
```
